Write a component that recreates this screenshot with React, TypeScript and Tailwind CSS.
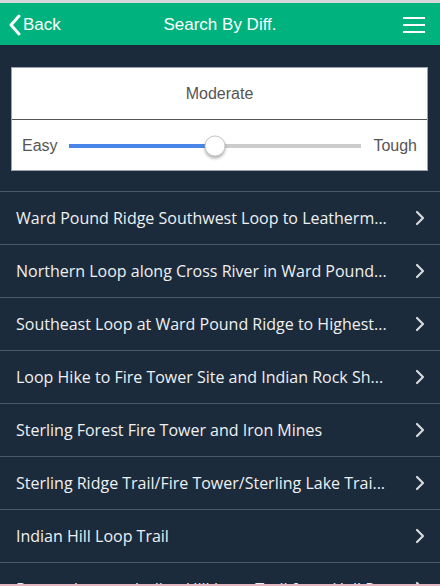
import React from "react";

const items = [
  "Ward Pound Ridge Southwest Loop to Leatherm...",
  "Northern Loop along Cross River in Ward Pound...",
  "Southeast Loop at Ward Pound Ridge to Highest...",
  "Loop Hike to Fire Tower Site and Indian Rock Sh...",
  "Sterling Forest Fire Tower and Iron Mines",
  "Sterling Ridge Trail/Fire Tower/Sterling Lake Trai...",
  "Indian Hill Loop Trail",
  "Pequot Loop to Indian Hill Loop Trail from Hall Ro...",
];

export default function App() {
  return (
    <div className="w-[440px] h-[586px] overflow-hidden bg-[#1c2b3b] flex flex-col border-t-[3px] border-[#d4d6d8] relative">
      <div className="h-[42px] pt-[2px] bg-[#00b27d] flex items-center px-[8px] shrink-0 relative" style={{ fontFamily: '"Liberation Sans", Arial, sans-serif' }}>
        <div className="flex items-center text-white text-[17px]">
          <svg width="14" height="22" viewBox="0 0 14 22" className="mr-[1px]">
            <path d="M11 2 L3 11 L11 20" stroke="white" strokeWidth="3" fill="none" strokeLinecap="round" strokeLinejoin="round" />
          </svg>
          <span>Back</span>
        </div>
        <div className="absolute left-0 right-0 text-center text-white text-[17px] pointer-events-none">Search By Diff.</div>
        <div className="ml-auto mr-[7px] flex flex-col gap-[5px]">
          <div className="w-[22px] h-[2px] bg-white" />
          <div className="w-[22px] h-[2px] bg-white" />
          <div className="w-[22px] h-[2px] bg-white" />
        </div>
      </div>
      <div className="pt-[22px] pb-[20px] pl-[11px] pr-[12px] border-b border-[#4b5967]" style={{ fontFamily: '"Liberation Sans", Arial, sans-serif' }}>
        <div className="bg-white border border-[#9aa3ad]">
          <div className="h-[52px] flex items-center justify-center text-[16px] text-[#555] border-b border-[#555]">Moderate</div>
          <div className="h-[50px] pt-[1px] flex items-center px-[10px] text-[16px] text-[#555]">
            <span>Easy</span>
            <div className="flex-1 ml-[11px] mr-[12px] h-[4px] bg-[#cccccc] relative">
              <div className="absolute left-0 top-0 h-[4px] w-[50%] bg-[#4a86e8]" />
              <div className="absolute left-[50%] top-1/2 w-[21px] h-[21px] -translate-x-1/2 -translate-y-1/2 rounded-full bg-white border border-[#c8c8c8] shadow-[0_2px_3px_rgba(0,0,0,0.3)]" />
            </div>
            <span>Tough</span>
          </div>
        </div>
      </div>
      <div style={{ fontFamily: '"Open Sans", sans-serif' }}>
        {items.map((t, i) => (
          <div key={i} className="h-[53px] flex items-center pl-[16px] pr-[14px] border-b border-[#4b5967] text-[#eef0f2] text-[16px]">
            <span className="flex-1 whitespace-nowrap overflow-hidden">{t}</span>
            <svg width="12" height="16" viewBox="0 0 12 16">
              <path d="M3 2 L9 8 L3 14" stroke="#d6d9dc" strokeWidth="2.2" fill="none" strokeLinecap="round" strokeLinejoin="round" />
            </svg>
          </div>
        ))}
      </div>
      <div className="absolute bottom-0 left-0 right-0 h-[2px] bg-[#e7b8c4]" />
    </div>
  );
}
